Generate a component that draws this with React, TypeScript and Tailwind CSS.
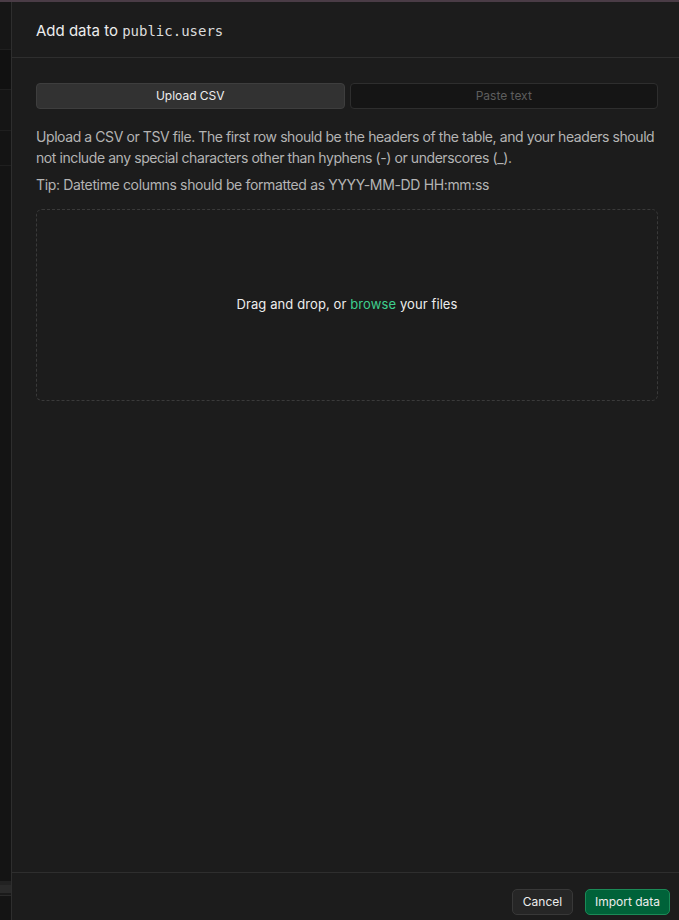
import React from "react";

export default function App() {
  return (
    <div className="flex h-[920px] w-[679px] flex-col overflow-hidden bg-[#121212]" style={{ fontFamily: "Inter, 'Noto Sans', sans-serif" }}>
      <div className="h-[2px] w-full shrink-0 bg-[#4a3c46]" />
      <div className="flex min-h-0 flex-1">
        {/* left background strip */}
        <div className="flex w-[11px] shrink-0 flex-col bg-[#141414]">
          <div className="h-[48px] border-b border-[#1f1f1f] bg-[#161616]" />
          <div className="h-[40px] border-b border-[#1f1f1f] bg-[#111111]" />
          <div className="h-[41px] border-b border-[#1f1f1f] bg-[#151515]" />
          <div className="h-[35px] border-b border-[#1f1f1f] bg-[#141414]" />
          <div className="flex-1 bg-[#141414]" />
          <div className="h-[4px] bg-[#222222]" />
          <div className="h-[8px] bg-[#2a2a2a]" />
          <div className="h-[2px] bg-[#1a1a1a]" />
          <div className="h-[1px] bg-[#2a2a2a]" />
          <div className="h-[24px] bg-[#141414]" />
        </div>
        {/* panel */}
        <div className="flex min-w-0 flex-1 flex-col border-l border-[#2e2e2e] bg-[#1c1c1c]">
          <div className="flex h-[56px] shrink-0 items-center border-b border-[#2e2e2e] pl-6 pt-[4px]">
            <h2 className="text-[15px] text-[#ededed]">
              Add data to{" "}
              <code className="text-[14px] text-[#dcdcdc]" style={{ fontFamily: "'DejaVu Sans Mono', monospace" }}>public.users</code>
            </h2>
          </div>
          <div className="flex flex-1 flex-col pl-6 pr-[21px] pt-[25px]">
            <div className="flex gap-[5px]">
              <button className="h-[26px] flex-1 rounded-[4px] border border-[#3e3e3e] bg-[#323232] text-[12px] text-[#ededed]">Upload CSV</button>
              <button className="h-[26px] flex-1 rounded-[4px] border border-[#2e2e2e] bg-[#151515] text-[12px] text-[#5e5e5e]">Paste text</button>
            </div>
            <p className="mt-[17px] whitespace-nowrap text-[14px] leading-[21px] tracking-[-0.42px] text-[#b4b4b4]">
              Upload a CSV or TSV file. The first row should be the headers of the table, and your headers should
              <br />
              not include any special characters other than hyphens (-) or underscores (_).
            </p>
            <p className="mt-[6px] text-[14px] leading-[21px] tracking-[-0.35px] text-[#b4b4b4]">Tip: Datetime columns should be formatted as YYYY-MM-DD HH:mm:ss</p>
            <div className="mt-[14px] flex h-[192px] items-center justify-center rounded-[6px] border border-dashed border-[#3a3a3a]">
              <p className="text-[13px] tracking-[0.1px] text-[#ededed]">
                Drag and drop, or <span className="text-[#3ecf8e]">browse</span> your files
              </p>
            </div>
          </div>
          <div className="flex h-[48px] shrink-0 items-start justify-end gap-3 border-t border-[#2e2e2e] pr-[9px] pt-[16px]">
            <button className="h-[26px] w-[61px] rounded-[5px] border border-[#383838] bg-[#262626] text-[12px] text-[#ededed]">Cancel</button>
            <button className="h-[26px] w-[85px] rounded-[5px] border border-[#1b8a57] bg-[#006239] text-[12px] text-[#ededed]">Import data</button>
          </div>
        </div>
      </div>
    </div>
  );
}
